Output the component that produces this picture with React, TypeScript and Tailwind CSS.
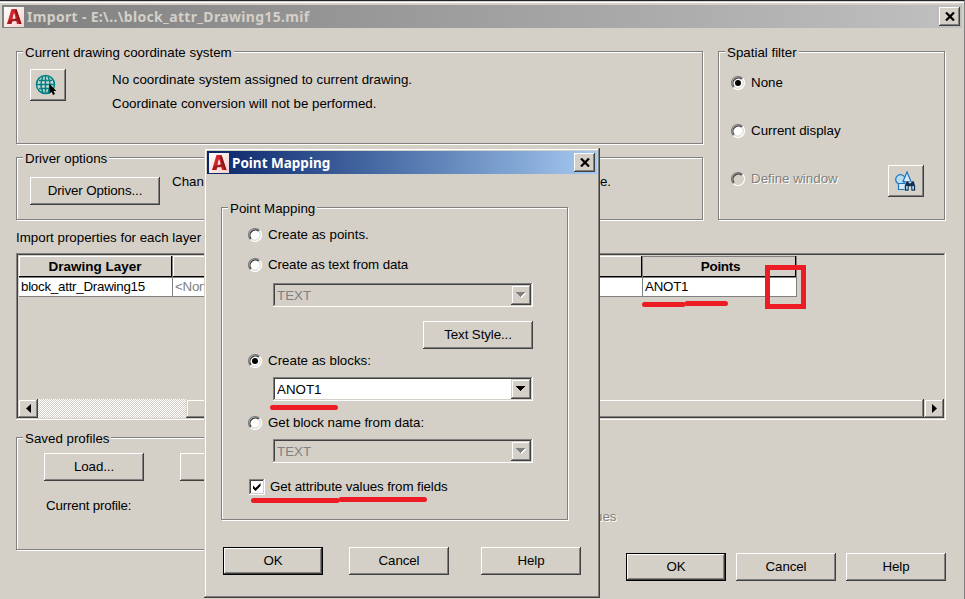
import React from "react";
import clsx from "clsx";

const RAISED =
  "bg-[#d4d0c8] shadow-[inset_-1px_-1px_#404040,inset_1px_1px_#ffffff,inset_-2px_-2px_#808080]";
const RAISED_SOFT =
  "bg-[#d4d0c8] shadow-[inset_-1px_-1px_#404040,inset_1px_1px_#d4d0c8,inset_-2px_-2px_#808080,inset_2px_2px_#ffffff]";
const SUNKEN =
  "p-[2px] shadow-[inset_-1px_-1px_#ffffff,inset_1px_1px_#808080,inset_-2px_-2px_#d4d0c8,inset_2px_2px_#404040]";

interface BoxProps {
  className?: string;
  children?: React.ReactNode;
}

function Button({ className, children, primary }: BoxProps & { primary?: boolean }) {
  return (
    <button
      className={clsx(
        "flex h-7 shrink-0 items-center justify-center pb-px leading-4 tracking-[-0.1px]",
        RAISED,
        primary && "border border-black",
        className
      )}
    >
      {children}
    </button>
  );
}

function Group({ title, className, children }: BoxProps & { title: string }) {
  return (
    <section
      className={clsx(
        "shrink-0 border border-[#808080] shadow-[1px_1px_#ffffff,inset_1px_1px_#ffffff]",
        className
      )}
    >
      <div className="-mt-2 ml-1.5 h-4 w-fit bg-[#d4d0c8] px-0.5 leading-[18px]">{title}</div>
      {children}
    </section>
  );
}

function RadioDot({ checked, disabled }: { checked?: boolean; disabled?: boolean }) {
  return (
    <svg className="h-3.5 w-3.5 shrink-0" viewBox="0 0 14 14">
      <circle cx="7" cy="7" r="6" fill={disabled ? "#d4d0c8" : "#fff"} />
      <path d="M2.400 11.600A6.500 6.500 0 0 1 11.600 2.400" fill="none" stroke="#808080" strokeWidth="1.200" />
      <path d="M3.200 10.800A5.400 5.400 0 0 1 10.800 3.200" fill="none" stroke="#404040" strokeWidth="1.300" />
      <path d="M11.600 2.400A6.500 6.500 0 0 1 2.400 11.600" fill="none" stroke="#fff" strokeWidth="1.200" />
      <path d="M10.800 3.200A5.400 5.400 0 0 1 3.200 10.800" fill="none" stroke="#d4d0c8" strokeWidth="1" />
      {checked && <circle cx="7" cy="7" r="3" fill="#000" />}
    </svg>
  );
}

function Radio({
  className,
  children,
  checked,
  disabled,
}: BoxProps & { checked?: boolean; disabled?: boolean }) {
  return (
    <label className={clsx("flex h-4 items-center gap-1.5 leading-4", className)}>
      <RadioDot checked={checked} disabled={disabled} />
      <span className={clsx(disabled && "text-[#808080] [text-shadow:1px_1px_#ffffff]")}>
        {children}
      </span>
    </label>
  );
}

function Combo({ value, disabled, className }: { value: string; disabled?: boolean; className?: string }) {
  return (
    <div
      className={clsx(
        "flex h-6 w-[260px] items-stretch",
        SUNKEN,
        disabled ? "text-[#808080]" : "bg-white",
        className
      )}
    >
      <span className="flex-1 pl-0.5 leading-[21px]">{value}</span>
      <span className={clsx("flex w-5 items-center justify-center", RAISED_SOFT)}>
        <svg className="h-[6px] w-[10px]" viewBox="0 0 10 6" shapeRendering="crispEdges">
          {disabled && <path d="M1 1h9v1L5.500 6z" fill="#fff" />}
          <path d="M0 0h9v1h-1v1h-1v1h-1v1h-1v1h-1v-1h-1v-1h-1v-1h-1v-1h-1z" fill={disabled ? "#808080" : "#000"} />
        </svg>
      </span>
    </div>
  );
}

function AppIcon() {
  return (
    <svg className="h-5 w-5 shrink-0" viewBox="0 0 20 20">
      <defs>
        <linearGradient id="paper" x1="0" y1="0" x2="1" y2="1">
          <stop offset="0" stopColor="#ffffff" />
          <stop offset="1" stopColor="#f3d0cb" />
        </linearGradient>
      </defs>
      <rect width="20" height="20" fill="url(#paper)" />
      <polygon points="7.500,2 12.500,2 17.500,17 13,17 10,6.500 7.500,17 3,17" fill="#cf262b" />
      <polygon points="12.500,2 17.500,17 15.200,17 10.800,4" fill="#8d1519" />
      <polygon points="3,17 5.500,13 14,10.800 15,14 8.500,14.300 7,17" fill="#a11a1f" />
      <polygon points="10,6 8.600,11.200 11.600,11" fill="#f6e4e2" />
    </svg>
  );
}

function CloseButton() {
  return (
    <button className={clsx("flex h-[19px] w-[21px] items-center justify-center", RAISED)}>
      <svg className="h-[9px] w-[10px]" viewBox="0 0 10 9">
        <path d="M1 .5l8 8M9 .5l-8 8" stroke="#000" strokeWidth="2.200" />
      </svg>
    </button>
  );
}

function GlobeIcon() {
  return (
    <svg className="h-[22px] w-[22px]" viewBox="0 0 22 22">
      <g fill="none" stroke="#008080" strokeWidth="1.500">
        <circle cx="10.500" cy="10.500" r="9" fill="#c5dcd8" />
        <path d="M8 2.500Q4 10.500 8 18.500M13 2.500Q17 10.500 13 18.500" />
        <path d="M10.500 1.500v18M1.500 10.500h18M4 6.500h13M4 14.500h13" />
      </g>
      <path d="M14.500 10v9.500l2-1.800 1.500 3.300 2-1-1.500-3h2.800z" fill="#000" />
    </svg>
  );
}

function FindIcon() {
  return (
    <svg className="h-[22px] w-[22px]" viewBox="0 0 22 22">
      <circle cx="6.500" cy="9.500" r="4.800" fill="#b9dcf5" stroke="#1b75bb" strokeWidth="1.200" />
      <path d="M4.500 13.500h8v6h-8z" fill="#d5ebfa" stroke="#1b75bb" strokeWidth="1.200" />
      <path d="M13 2l4 9.500H9z" fill="#d5ebfa" stroke="#1b75bb" strokeWidth="1.200" />
      <path
        d="M12 11h3v2h2v-2h3l1.500 5v5h-4.500v-4.500h-2V21h-4.500v-5z"
        fill="#12304f"
        stroke="#e8f2fa"
        strokeWidth=".5"
      />
      <path d="M12 16h1.800v3.500H12zM18.200 16H20v3.500h-1.800z" fill="#9cc8ea" />
    </svg>
  );
}

function HeaderCell({ className, children }: BoxProps) {
  return (
    <div
      className={clsx(
        "h-[21px] border-r border-b border-black text-center text-[13.500px] leading-[21px] font-bold",
        className
      )}
    >
      {children}
    </div>
  );
}

function LayerTable() {
  return (
    <div className={clsx("mt-2 flex h-[167px] w-[930px] flex-col", SUNKEN)}>
      <div className="flex-1 pt-px pl-px">
        <div className="grid w-[778px] grid-cols-[153px_469px_154px] gap-x-px bg-[#808080]">
          <HeaderCell className="bg-[#d4d0c8] shadow-[inset_1px_1px_#ffffff]">Drawing Layer</HeaderCell>
          <HeaderCell className="bg-[#d4d0c8] shadow-[inset_1px_1px_#ffffff]" />
          <HeaderCell className="mr-px bg-[#d4d0c8] pl-[3px] tracking-[-0.3px] shadow-[inset_0_1px_#808080]">
            Points
          </HeaderCell>
        </div>
        <div className="grid h-5 w-[778px] grid-cols-[153px_469px_153px] gap-x-px border-y border-[#808080] bg-[#808080] leading-[17px] tracking-[-0.25px]">
          <span className="bg-white pl-0.5">block_attr_Drawing15</span>
          <span className="bg-white pl-0.5 text-[#808080]">&lt;None&gt;</span>
          <span className="bg-white pl-0.5">ANOT1</span>
        </div>
      </div>
      <div className="flex h-[19px]">
        <span className={clsx("flex w-5 items-center justify-center", RAISED_SOFT)}>
          <svg className="h-[9px] w-[5px]" viewBox="0 0 5 9">
            <path d="M5 0v9L0 4.500z" />
          </svg>
        </span>
        <span className="w-[148px] bg-[repeating-conic-gradient(#ffffff_0_25%,#d4d0c8_0_50%)] bg-[length:2px_2px]" />
        <span className={clsx("flex-1", RAISED_SOFT)} />
        <span className={clsx("flex w-5 items-center justify-center", RAISED_SOFT)}>
          <svg className="h-[9px] w-[5px]" viewBox="0 0 5 9">
            <path d="M0 0v9l5-4.500z" />
          </svg>
        </span>
      </div>
    </div>
  );
}

function PointMappingDialog() {
  return (
    <div className="absolute top-[147px] left-[204px] h-[450px] w-[396px] bg-[#d4d0c8] p-[3px] shadow-[inset_-1px_-1px_#404040,inset_1px_1px_#d4d0c8,inset_-2px_-2px_#808080,inset_2px_2px_#ffffff]">
      <div className="flex h-[23px] items-center bg-linear-to-r from-[#0a246a] to-[#a6caf0] pr-0.5 pl-0.5">
        <AppIcon />
        <span className="flex-1 pl-[3px] font-['Noto_Sans',sans-serif] text-[13.500px] leading-5 font-bold text-white">
          Point Mapping
        </span>
        <CloseButton />
      </div>

      <Group title="Point Mapping" className="mt-[33px] ml-3.5 h-[313px] w-[347px]">
        <Radio className="mt-[11px] ml-[26px]">Create as points.</Radio>
        <Radio className="mt-3.5 ml-[26px] tracking-[-0.12px]">Create as text from data</Radio>
        <Combo className="mt-2.5 ml-[51px]" value="TEXT" disabled />
        <Button className="mt-3.5 ml-[201px] w-[110px]">Text Style...</Button>
        <Radio className="mt-1 ml-[26px]" checked>
          Create as blocks:
        </Radio>
        <Combo className="mt-2 ml-[51px]" value="ANOT1" />
        <Radio className="mt-3.5 ml-[26px] tracking-[-0.04px]">Get block name from data:</Radio>
        <Combo className="mt-2 ml-[51px]" value="TEXT" disabled />
        <label className="mt-4 ml-[27px] flex h-4 items-center gap-[5px] leading-4 tracking-[-0.1px]">
          <span className={clsx("h-4 w-4 bg-white", SUNKEN)}>
            <svg className="h-3 w-3" viewBox="0 0 12 12">
              <path d="M2 4.500v3l2.500 2.500 5-5V2l-5 5z" />
            </svg>
          </span>
          Get attribute values from fields
        </label>
      </Group>

      <div className="mt-[27px] ml-4 flex">
        <Button className="w-[100px]" primary>
          OK
        </Button>
        <Button className="ml-[26px] w-[100px]">Cancel</Button>
        <Button className="ml-8 w-[100px]">Help</Button>
      </div>
    </div>
  );
}

/* Red marker strokes drawn over the windows */
function Markers() {
  return (
    <>
      <div className="absolute top-[264px] left-[765px] h-[44px] w-[41px] border-[5px] border-[#ed1c24]" />
      <svg className="absolute -top-px left-0 h-[599px] w-[965px]" viewBox="0 0 965 599">
        <g stroke="#ed1c24" strokeWidth="5" strokeLinecap="round" fill="none">
          <path d="M644.500 304.500H683M687 303.500H725.500" />
          <path d="M272.500 407.500H335.500" />
          <path d="M253.500 500.500H337M341 499.500H424.500" />
        </g>
      </svg>
    </>
  );
}

export default function App() {
  return (
    <main className="relative h-[599px] w-[965px] overflow-hidden border-t border-r border-t-[#23232f] border-r-[#808080] bg-[#d4d0c8] pt-1 font-['Liberation_Sans',sans-serif] text-[13.330px] whitespace-nowrap text-black shadow-[inset_0_2px_#d4d0c8]">
      <div className="-mt-[3px] mb-0.5 h-px w-full bg-white" />
      <div className="ml-0.5 flex h-[23px] w-[960px] items-center bg-linear-to-r from-[#808080] to-[#c0c0c0] pr-0.5 pl-0.5">
        <AppIcon />
        <span className="flex-1 pl-[3px] font-['Noto_Sans',sans-serif] text-[14px] leading-5 font-bold tracking-[0.320px] text-[#d4d0c8]">
          Import - E:\..\block_attr_Drawing15.mif
        </span>
        <CloseButton />
      </div>

      <div className="pt-[23px] pl-4">
        <div className="flex gap-[15px]">
          <div className="flex flex-col gap-[13px]">
            <Group title="Current drawing coordinate system" className="h-[93px] w-[687px]">
              <div className="flex pt-[9px] pl-[13px]">
                <span className={clsx("flex h-8 w-9 items-center justify-center pr-1 pb-px", RAISED)}>
                  <GlobeIcon />
                </span>
                <p className="-mt-px ml-[46px] leading-6">
                  No coordinate system assigned to current drawing.
                  <br />
                  Coordinate conversion will not be performed.
                </p>
              </div>
            </Group>
            <Group title="Driver options" className="h-[63px] w-[687px]">
              <div className="flex pt-[11px] pl-[13px]">
                <Button className="w-[130px]">Driver Options...</Button>
                <p className="-mt-[3px] ml-3 flex h-4 w-[439px] justify-between leading-4">
                  <span>Chan</span>
                  <span>e.</span>
                </p>
              </div>
            </Group>
          </div>
          <Group title="Spatial filter" className="h-[169px] w-[227px]">
            <Radio className="mt-[15px] ml-3" checked>
              None
            </Radio>
            <Radio className="mt-8 ml-3">Current display</Radio>
            <div className="mt-[26px] ml-3 flex">
              <Radio className="mt-1.5 w-[157px]" disabled>
                Define window
              </Radio>
              <span className={clsx("flex h-8 w-9 items-center justify-center pr-0.5", RAISED)}>
                <FindIcon />
              </span>
            </div>
          </Group>
        </div>

        <div className="mt-[9px] h-4 leading-[18px]">Import properties for each layer</div>
        <LayerTable />

        <div className="mt-[17px] flex">
          <Group title="Saved profiles" className="h-[113px] w-[560px]">
            <div className="mt-[7px] ml-[27px] flex gap-9">
              <Button className="w-[100px]">Load...</Button>
              <Button className="w-[100px]" />
            </div>
            <div className="mt-4 ml-[29px] leading-[18px] tracking-[-0.18px]">Current profile:</div>
          </Group>
          <span className="mt-[72px] ml-[19px] h-4 leading-4 text-[#808080] [text-shadow:1px_1px_#ffffff]">
            ues
          </span>
        </div>
        <div className="mt-[3px] ml-[610px] flex gap-2.5">
          <Button className="w-[100px]" primary>
            OK
          </Button>
          <Button className="w-[100px]">Cancel</Button>
          <Button className="w-[100px]">Help</Button>
        </div>
      </div>

      <PointMappingDialog />
      <Markers />
    </main>
  );
}
